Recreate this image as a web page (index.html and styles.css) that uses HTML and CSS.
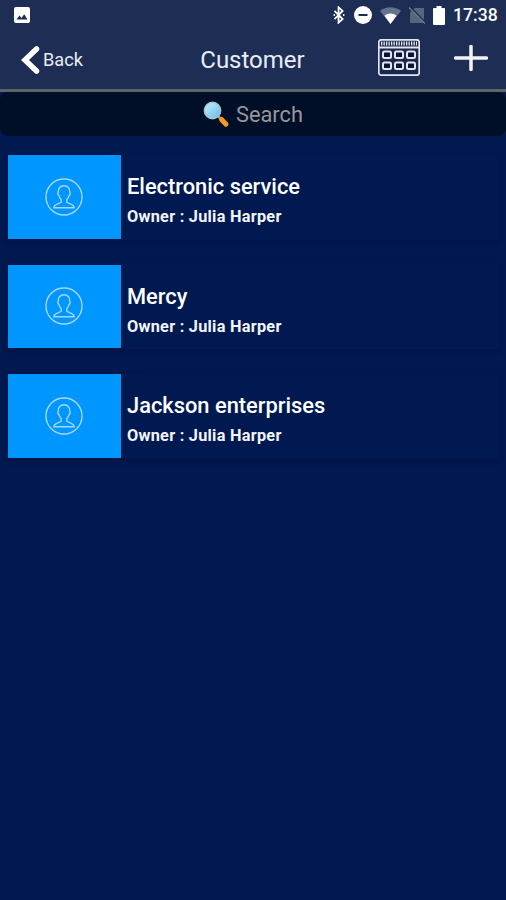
FILE: index.html
```html
<!DOCTYPE html>
<html lang="en">
<head>
<meta charset="utf-8">
<title>Customer</title>
<link rel="stylesheet" href="styles.css">
</head>
<body>
<svg class="defs" width="0" height="0">
  <symbol id="person" viewBox="0 0 38 38">
    <circle cx="19" cy="19" r="18"/>
    <path d="M19 7.800c-4.200 0-6 2.900-5.800 6.400-.8.700-.3 2.900.8 3.400.3 1.800 1.200 3 2.200 3.900v2.600c-1.400 1.800-7 1.600-7.400 5.700h20.400c-.4-4.100-6-3.900-7.400-5.700v-2.600c1-.9 1.900-2.100 2.200-3.900 1.100-.5 1.600-2.700.8-3.400.2-3.500-1.600-6.400-5.800-6.400z"/>
  </symbol>
</svg>
<header class="top">
  <div class="status">
    <svg class="photo" width="16" height="16" viewBox="0 0 16 16"><rect width="16" height="16" rx="2" fill="#fff"/><path d="M2.500 12.500l3-4 2 2.400 2.700-3.600 3.300 5.200z" fill="#1d2b51"/></svg>
    <div class="indicators">
      <svg width="14" height="18" viewBox="0 0 14 20" fill="none" stroke="#fff" stroke-width="2"><path d="M2 5.500l9 9-4.500 4V1.500l4.500 4-9 9"/><path d="M1 10h1.500M11.500 10h1.500"/></svg>
      <svg width="18" height="18" viewBox="0 0 18 18"><circle cx="9" cy="9" r="9" fill="#fff"/><path d="M4.500 9h9" stroke="#1d2b51" stroke-width="2"/></svg>
      <svg width="21" height="17" viewBox="0 0 21 17"><path d="M0 4C6-1 15-1 21 4L10.500 17z" fill="#66718d"/><path d="M4.500 8.800c3.600-3 8.400-3 12 0L10.500 17z" fill="#fff"/></svg>
      <svg width="16" height="17" viewBox="0 0 16 17"><path d="M5.500 1H15v15H1V5.500z" fill="#59647f"/><path d="M1 0l15 15.500" stroke="#1d2b51" stroke-width="2"/><path d="M0 .5l16 16" stroke="#78829a" stroke-width="1.200"/></svg>
      <svg width="12" height="19" viewBox="0 0 12 19"><path d="M3.500 0h5v2H11q1 0 1 1v15q0 1-1 1H1q-1 0-1-1V3q0-1 1-1h2.500z" fill="#fff"/></svg>
      <span class="time">17:38</span>
    </div>
  </div>
  <nav class="bar">
    <div class="back">
      <svg width="19" height="30" viewBox="0 0 19 30"><path d="M15.500 4L4 15l11.500 11" fill="none" stroke="#fff" stroke-width="5.500" stroke-linecap="round"/></svg>
      <span>Back</span>
    </div>
    <h1>Customer</h1>
    <div class="actions">
      <svg width="42" height="37" viewBox="0 0 42 37" fill="none" stroke="#e2e6f0">
        <rect x=".8" y=".8" width="40.400" height="35.400" rx="2.500" fill="#1b284e" stroke-width="1.700"/>
        <path d="M1 8.500h40" stroke-width="2"/>
        <path d="M3 4.500h36" stroke-width="4" stroke-dasharray="1.300 1.200"/>
        <g fill="#091332" stroke-width="2">
          <rect x="5" y="12.500" width="8" height="6.500" rx="1.500"/><rect x="17" y="12.500" width="8" height="6.500" rx="1.500"/><rect x="29" y="12.500" width="8" height="6.500" rx="1.500"/>
          <rect x="5" y="23.500" width="8" height="6.500" rx="1.500"/><rect x="17" y="23.500" width="8" height="6.500" rx="1.500"/><rect x="29" y="23.500" width="8" height="6.500" rx="1.500"/>
        </g>
      </svg>
      <svg width="34" height="26" viewBox="0 0 34 26"><path d="M1.500 13h31M17 1.500v23" stroke="#f1f3f8" stroke-width="3.500" stroke-linecap="round"/></svg>
    </div>
  </nav>
</header>
<div class="search">
  <svg width="27" height="27" viewBox="0 0 27 27">
    <defs><linearGradient id="glass" x2="1" y2="1"><stop stop-color="#c6edfb"/><stop offset="1" stop-color="#65bce8"/></linearGradient></defs>
    <path d="M15 15l3 3" stroke="#8b9ba5" stroke-width="2.500"/>
    <path d="M18.500 18.500l4.500 4.800" stroke="#f59a1b" stroke-width="5" stroke-linecap="round"/>
    <circle cx="9.500" cy="9.500" r="8.200" fill="url(#glass)" stroke="#a5c2ce" stroke-width="1.400"/>
  </svg>
  <span>Search</span>
</div>
<main class="list">
  <article class="card">
    <div class="thumb"><svg width="38" height="38"><use href="#person"/></svg></div>
    <div class="info"><h2>Electronic service</h2><p>Owner : Julia Harper</p></div>
  </article>
  <article class="card">
    <div class="thumb"><svg width="38" height="38"><use href="#person"/></svg></div>
    <div class="info"><h2>Mercy</h2><p>Owner : Julia Harper</p></div>
  </article>
  <article class="card">
    <div class="thumb"><svg width="38" height="38"><use href="#person"/></svg></div>
    <div class="info"><h2>Jackson enterprises</h2><p>Owner : Julia Harper</p></div>
  </article>
</main>
</body>
</html>
```

FILE: styles.css
```css
* { box-sizing: border-box; }
body {
  margin: 0;
  height: 900px;
  overflow: hidden;
  background: #001950;
  color: #fff;
  font-family: Roboto, "Liberation Sans", sans-serif;
}
svg { display: block; flex: none; }
.defs { height: 0; }
h1, h2, p { margin: 0; white-space: nowrap; }
.top {
  height: 92px;
  background: #1d2d53;
  border-bottom: 3px solid #5b636b;
}
.status {
  height: 30px;
  padding: 0 9px 0 14px;
  display: flex;
  align-items: center;
  justify-content: space-between;
}
.indicators { display: flex; align-items: center; gap: 8px; }
.time {
  width: 44px;
  font-size: 17.600px;
  font-weight: 500;
  line-height: 20px;
  white-space: nowrap;
}
.bar {
  height: 59px;
  padding: 0 18px 0 21px;
  display: grid;
  grid-template-columns: 1fr auto 1fr;
  align-items: center;
}
.back { display: flex; align-items: center; gap: 3px; font-size: 18.200px; color: #e8ebf3; }
h1 { margin: 0 3px 0 -1px; font-size: 24px; font-weight: 400; line-height: 30px; color: #e9edf6; }
.actions { display: flex; align-items: center; justify-content: flex-end; gap: 34px; padding-bottom: 4px; }
.search {
  height: 44px;
  display: flex;
  align-items: center;
  justify-content: center;
  gap: 6px;
  background: #000e28;
  border-radius: 8px;
  font-size: 21.800px;
  color: #969799;
}
.list { padding: 18px 7px 0; display: grid; gap: 24px; }
.card {
  height: 85.600px;
  display: flex;
  box-shadow: 0 2px 4px #00103a80;
}
.thumb {
  width: 115px;
  padding-right: 2px;
  background: #0096ff;
  border: 1px solid #001440;
  display: grid;
  place-items: center;
}
.thumb svg { fill: none; stroke: #a4d7ff; stroke-width: 1.400; }
.info { padding: 19px 0 0 5px; }
h2 { font-size: 21.850px; font-weight: 500; line-height: 28px; }
p {
  margin-top: 6px;
  font-size: 16.300px;
  font-weight: 700;
  line-height: 20px;
  letter-spacing: .26px;
  color: #f2f5fb;
}
```
